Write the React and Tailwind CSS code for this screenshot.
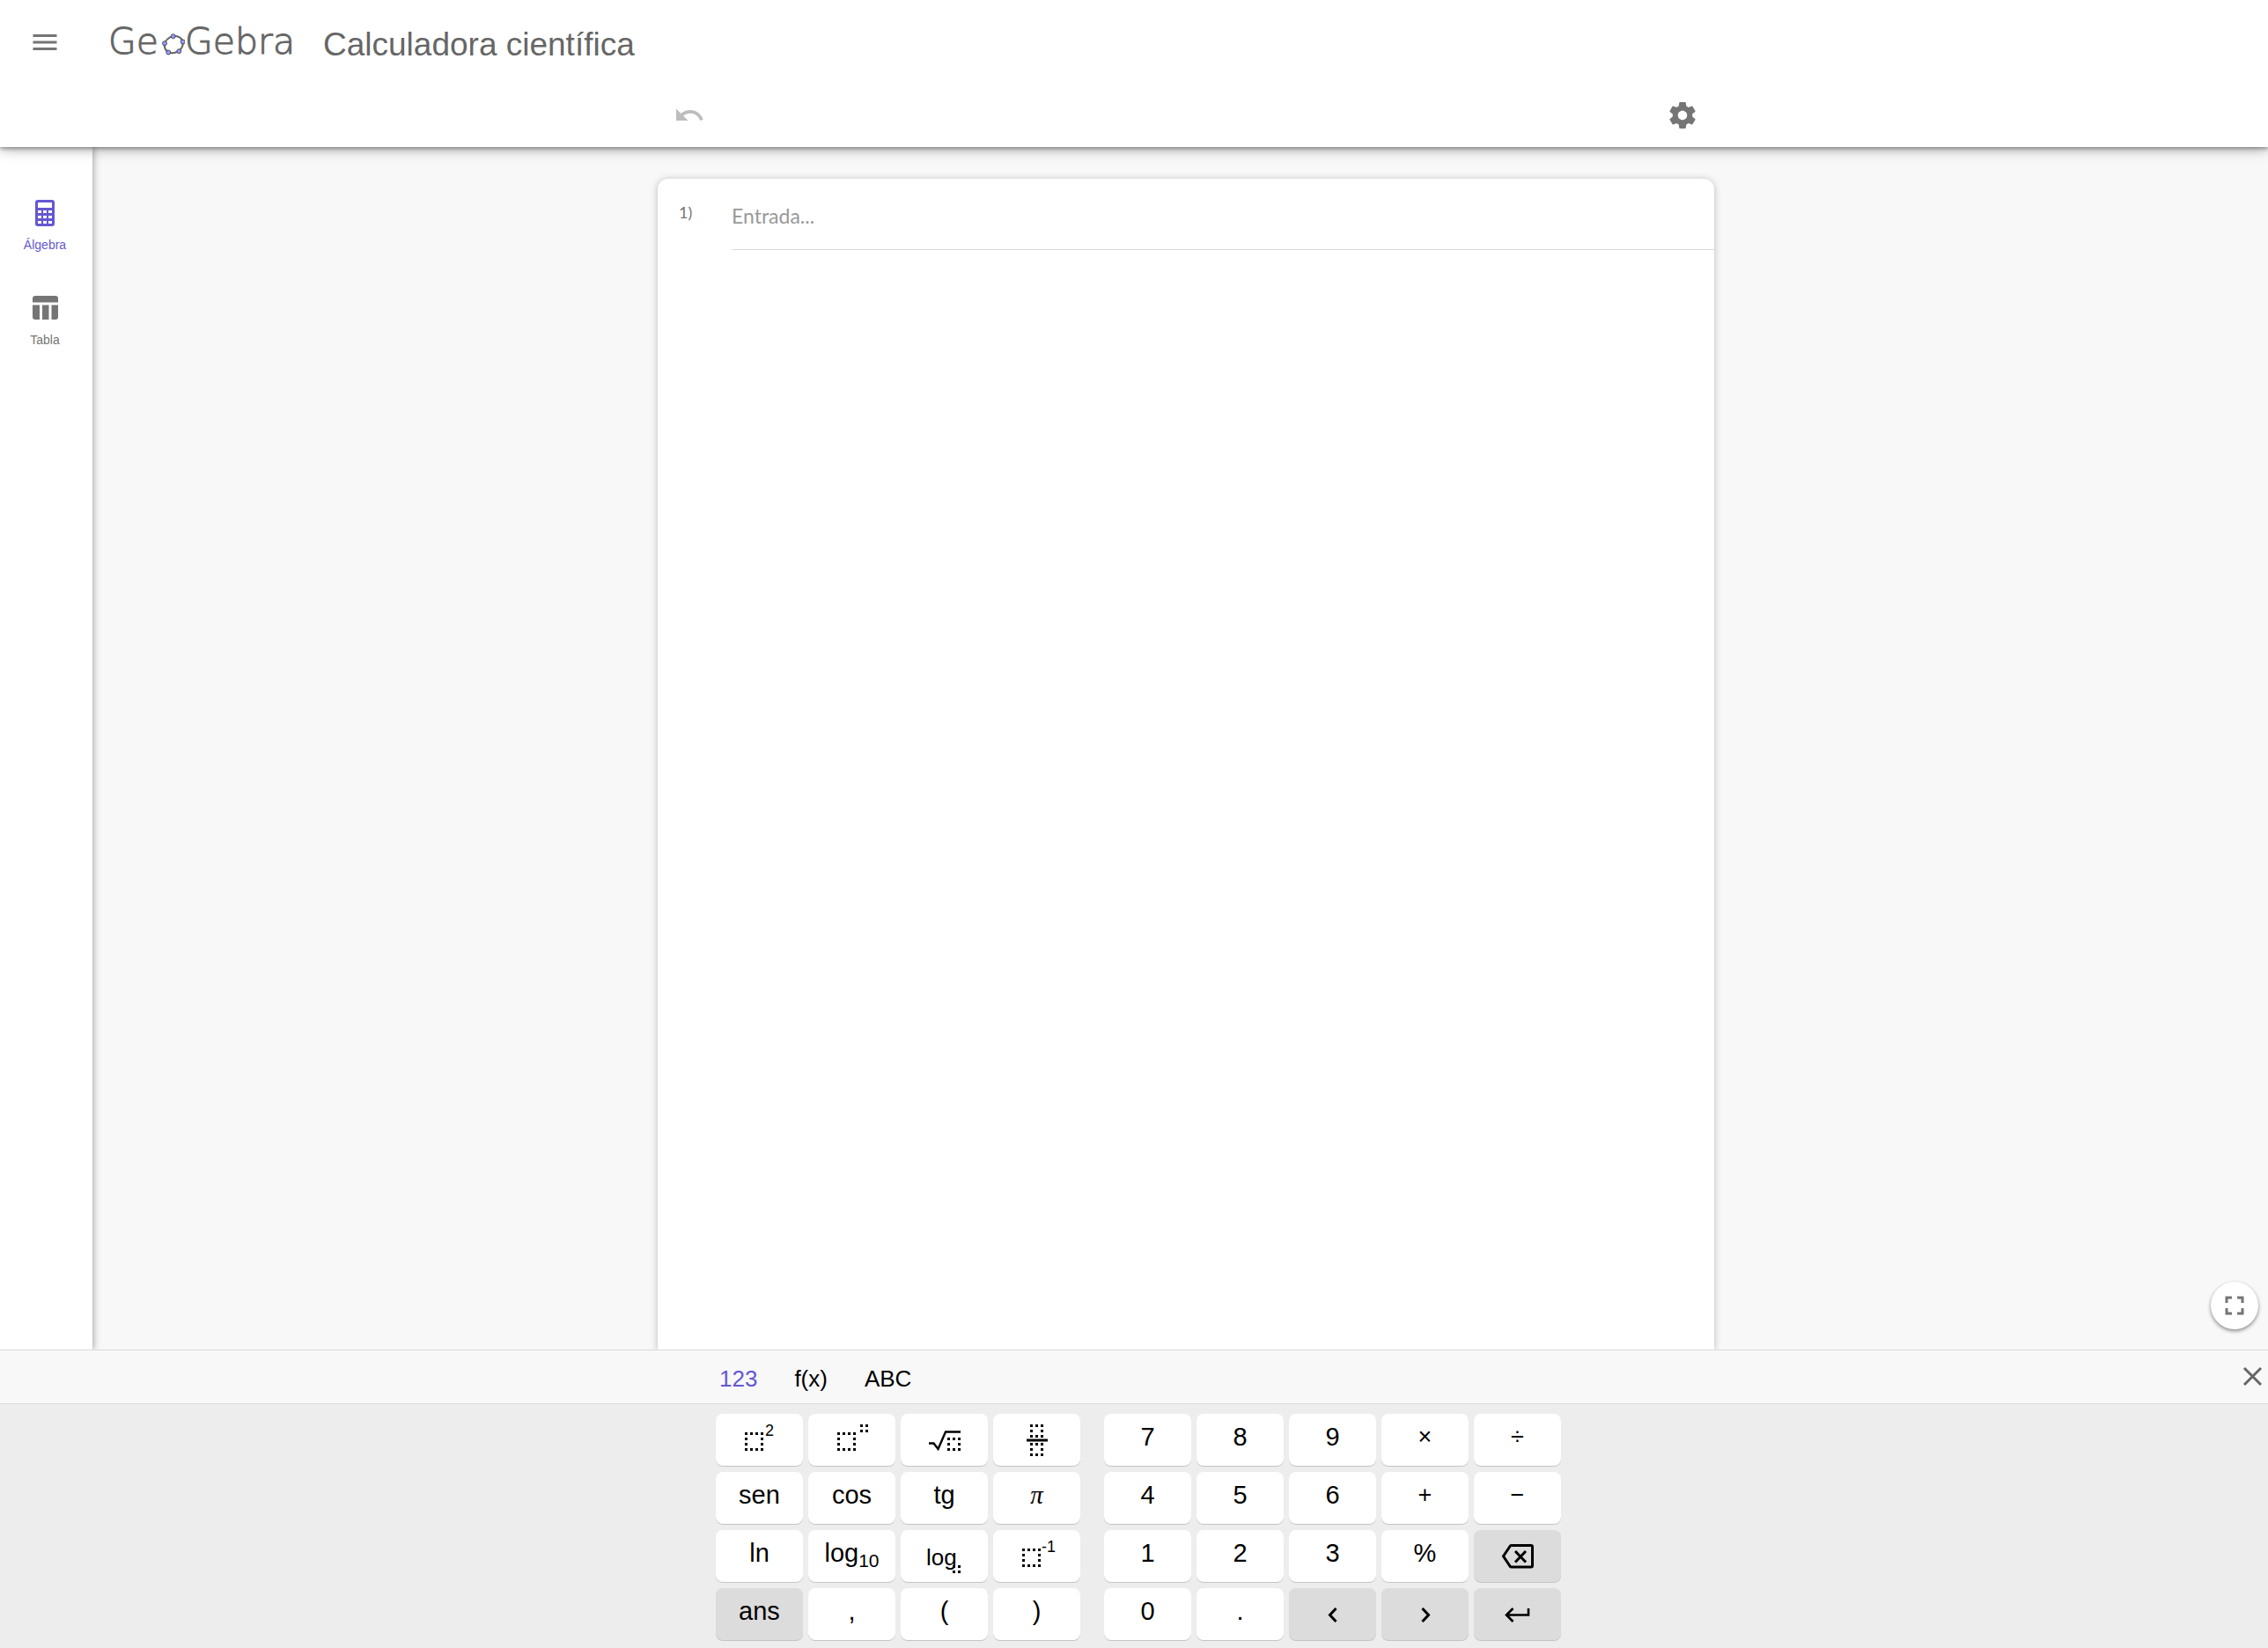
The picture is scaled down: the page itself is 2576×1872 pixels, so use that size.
import React from "react";

const ring = (x, y, cols, rows) => {
  const dots = [];
  for (let r = 0; r < rows; r++)
    for (let c = 0; c < cols; c++)
      if (r === 0 || c === 0 || r === rows - 1 || c === cols - 1)
        dots.push([x + c * 6, y + r * 6]);
  return dots;
};

function Dots({ x, y, cols, rows }) {
  return ring(x, y, cols, rows).map(([dx, dy]) => (
    <rect key={`${dx}-${dy}`} x={dx} y={dy} width="3" height="3" />
  ));
}

function KeyIcon({ children }) {
  return (
    <svg className="size-[49px]" viewBox="0 0 49 49" fill="currentColor" aria-hidden="true">
      {children}
    </svg>
  );
}

const stroke = { fill: "none", stroke: "currentColor", strokeWidth: 3 };

const icons = {
  square: (
    <KeyIcon>
      <Dots x={8} y={16} cols={4} rows={4} />
      <text x="31" y="20" fontSize="18">2</text>
    </KeyIcon>
  ),
  power: (
    <KeyIcon>
      <Dots x={8} y={16} cols={4} rows={4} />
      <Dots x={34} y={7} cols={2} rows={2} />
    </KeyIcon>
  ),
  root: (
    <KeyIcon>
      <path d="M7 28.5H12.5L17.5 35L26 15.5H43" {...stroke} strokeWidth="2.4" />
      <Dots x={28} y={22} cols={3} rows={3} />
    </KeyIcon>
  ),
  fraction: (
    <KeyIcon>
      <Dots x={17} y={7} cols={3} rows={3} />
      <rect x="13" y="23.5" width="24" height="3" />
      <Dots x={17} y={28} cols={3} rows={3} />
    </KeyIcon>
  ),
  logBase: (
    <KeyIcon>
      <text x="4" y="35" fontSize="26">log</text>
      <Dots x={34} y={35} cols={2} rows={2} />
    </KeyIcon>
  ),
  inverse: (
    <KeyIcon>
      <Dots x={8} y={16} cols={4} rows={4} />
      <text x="30" y="20" fontSize="18">-1</text>
    </KeyIcon>
  ),
  backspace: (
    <KeyIcon>
      <path d="M17.5 12.5H40A1.5 1.5 0 0 1 41.5 14V35.5A1.5 1.5 0 0 1 40 37H17.5Q16.5 37 16 36L8.5 24.75L16 13.5Q16.5 12.5 17.5 12.5Z" {...stroke} />
      <path d="M22 19L34 31.5M34 19L22 31.5" {...stroke} />
    </KeyIcon>
  ),
  left: (
    <KeyIcon>
      <path d="M28.5 18L21.5 25.5L28.5 33" {...stroke} />
    </KeyIcon>
  ),
  right: (
    <KeyIcon>
      <path d="M21.5 18L28.5 25.5L21.5 33" {...stroke} />
    </KeyIcon>
  ),
  enter: (
    <KeyIcon>
      <path d="M37 18V25.5H12.5M19.5 18L12 25.5L19.5 33" {...stroke} strokeWidth="2.6" />
    </KeyIcon>
  ),
};

const functionKeys = [
  { icon: "square", label: "al cuadrado" },
  { icon: "power", label: "potencia" },
  { icon: "root", label: "raíz cuadrada" },
  { icon: "fraction", label: "fracción" },
  { text: "sen" },
  { text: "cos" },
  { text: "tg" },
  { text: "π", serif: true },
  { text: "ln" },
  { text: "log", sub: "10" },
  { icon: "logBase", label: "logaritmo" },
  { icon: "inverse", label: "inverso" },
  { text: "ans", dark: true },
  { text: "," },
  { text: "(" },
  { text: ")" },
];

const numberKeys = [
  { text: "7" },
  { text: "8" },
  { text: "9" },
  { text: "×", small: true },
  { text: "÷", small: true },
  { text: "4" },
  { text: "5" },
  { text: "6" },
  { text: "+", small: true },
  { text: "−", small: true },
  { text: "1" },
  { text: "2" },
  { text: "3" },
  { text: "%" },
  { icon: "backspace", label: "borrar", dark: true },
  { text: "0" },
  { text: "." },
  { icon: "left", label: "izquierda", dark: true },
  { icon: "right", label: "derecha", dark: true },
  { icon: "enter", label: "intro", dark: true },
];

function Key({ text, sub, icon, label, dark, serif, small }) {
  return (
    <button
      type="button"
      aria-label={label}
      className={`flex h-[59px] w-[99px] items-center justify-center rounded-lg text-black shadow-[0_1px_0_#c4c4c4] ${
        dark ? "bg-[#dcdcdc]" : "bg-white"
      }`}
    >
      {icon ? (
        icons[icon]
      ) : (
        <span
          className={`pb-1.5 leading-none ${small ? "text-[27px]" : "text-[29px]"} ${
            serif ? "font-['Liberation_Serif',serif] italic" : ""
          }`}
        >
          {text}
          {sub && <sub className="bottom-[-6px] text-[21px] leading-none">{sub}</sub>}
        </span>
      )}
    </button>
  );
}

function Logo() {
  const points = [
    [16.7, 8.2],
    [27.7, 14.5],
    [23.3, 25.2],
    [11.3, 26.5],
    [7, 16.2],
  ];
  return (
    <a
      href="#inicio"
      aria-label="GeoGebra"
      className="flex items-center font-['DejaVu_Sans_Light','DejaVu_Sans',sans-serif] text-[41px] leading-none font-extralight text-[#666] [-webkit-text-stroke:1px_#666]"
    >
      <span>Ge</span>
      <svg className="size-[30px]" viewBox="0 0 30 30" aria-hidden="true">
        <ellipse cx="17.3" cy="17.6" rx="10.8" ry="9.2" transform="rotate(-28 17.3 17.6)" fill="none" stroke="#666" strokeWidth="2" />
        {points.map(([x, y]) => (
          <circle key={x} cx={x} cy={y} r="2.5" fill="#9999ff" stroke="#333" strokeWidth="0.8" />
        ))}
      </svg>
      <span>Gebra</span>
    </a>
  );
}

function Header() {
  return (
    <header className="z-20 bg-white shadow-[0_2px_4px_rgba(0,0,0,0.3),0_2px_14px_rgba(0,0,0,0.35)]">
      <div className="flex h-[95px] items-center pl-[33px]">
        <button type="button" aria-label="Menú" className="mr-[54px]">
          <svg className="size-9" viewBox="0 0 24 24" fill="#757575" aria-hidden="true">
            <path d="M3 18h18v-2H3v2zm0-5h18v-2H3v2zm0-7v2h18V6H3z" />
          </svg>
        </button>
        <Logo />
        <h1 className="ml-8 pt-1.5 text-[37px] leading-none text-[#666]">Calculadora científica</h1>
      </div>
      <div className="flex h-[72px] justify-center pl-[118px]">
        <div className="flex w-full max-w-[1200px] items-center justify-between px-[18px]">
          <button type="button" aria-label="Deshacer" disabled>
            <svg className="size-9" viewBox="0 0 24 24" fill="#bdbdbd" aria-hidden="true">
              <path d="M12.5 8c-2.65 0-5.05.99-6.9 2.6L2 7v9h9l-3.62-3.62c1.39-1.16 3.16-1.88 5.12-1.88 3.54 0 6.55 2.31 7.6 5.5l2.37-.78C21.08 11.03 17.15 8 12.5 8z" />
            </svg>
          </button>
          <button type="button" aria-label="Configuración">
            <svg className="size-9" viewBox="0 0 24 24" fill="#757575" aria-hidden="true">
              <path d="M19.43 12.98c.04-.32.07-.64.07-.98s-.03-.66-.07-.98l2.11-1.65c.19-.15.24-.42.12-.64l-2-3.46c-.12-.22-.39-.3-.61-.22l-2.49 1c-.52-.4-1.08-.73-1.69-.98l-.38-2.65C14.46 2.18 14.25 2 14 2h-4c-.25 0-.46.18-.49.42l-.38 2.65c-.61.25-1.17.59-1.69.98l-2.49-1c-.23-.09-.49 0-.61.22l-2 3.46c-.13.22-.07.49.12.64l2.11 1.65c-.04.32-.07.65-.07.98s.03.66.07.98l-2.11 1.65c-.19.15-.24.42-.12.64l2 3.46c.12.22.39.3.61.22l2.49-1c.52.4 1.08.73 1.69.98l.38 2.65c.03.24.24.42.49.42h4c.25 0 .46-.18.49-.42l.38-2.65c.61-.25 1.17-.59 1.69-.98l2.49 1c.23.09.49 0 .61-.22l2-3.46c.12-.22.07-.49-.12-.64l-2.11-1.65zM12 15.5c-1.93 0-3.5-1.57-3.5-3.5s1.57-3.5 3.5-3.5 3.5 1.57 3.5 3.5-1.57 3.5-3.5 3.5z" />
            </svg>
          </button>
        </div>
      </div>
    </header>
  );
}

function Sidebar() {
  return (
    <nav className="z-10 flex w-[105px] flex-col items-center gap-[42px] bg-white pt-[57px] pr-[3px] shadow-[1px_0_8px_rgba(0,0,0,0.35)]">
      <button type="button" className="flex flex-col items-center gap-1.5 text-[14px] leading-6 text-[#6557d2]">
        <svg className="size-9" viewBox="0 0 36 36" aria-hidden="true">
          <path
            fill="currentColor"
            fillRule="evenodd"
            d="M10 3H26Q29 3 29 6V30Q29 33 26 33H10Q7 33 7 30V6Q7 3 10 3ZM10 6V12H26V6ZM10 15V18H14V15ZM16 15V18H20V15ZM22 15V18H26V15ZM10 21V24H14V21ZM16 21V24H20V21ZM22 21V24H26V21ZM10 27V30H14V27ZM16 27V30H20V27ZM22 27V30H26V27Z"
          />
        </svg>
        <span>Álgebra</span>
      </button>
      <button type="button" className="flex flex-col items-center gap-1.5 text-[14px] leading-6 text-[#757575]">
        <svg className="size-9" viewBox="0 0 36 36" fill="currentColor" aria-hidden="true">
          <path d="M7 4H30Q33 4 33 7V11.500H4V7Q4 4 7 4ZM4 14.500H12V31H7Q4 31 4 28ZM15 14.500H22.500V31H15ZM25.500 14.500H33V28Q33 31 30 31H25.500Z" />
        </svg>
        <span>Tabla</span>
      </button>
    </nav>
  );
}

function Workspace() {
  return (
    <main className="relative flex flex-1 justify-center overflow-hidden bg-[#f8f8f8] pt-9 pl-[13px]">
      <section className="w-full max-w-[1200px] rounded-t-xl bg-white shadow-[0_1px_8px_rgba(0,0,0,0.25)]">
        <div className="flex font-[Lato,sans-serif]">
          <label htmlFor="entrada" className="w-[84px] pt-[26px] pl-6 text-[18px] leading-6 text-[#757575]">
            1)
          </label>
          <input
            id="entrada"
            type="text"
            placeholder="Entrada..."
            className="h-[81px] flex-1 border-b border-[#dcdcdc] pt-1 text-[23px] outline-none placeholder:text-[#999]"
          />
        </div>
      </section>
      <button
        type="button"
        aria-label="Pantalla completa"
        className="absolute right-[11px] bottom-[23px] flex size-[54px] items-center justify-center rounded-full bg-white shadow-[0_2px_4px_rgba(0,0,0,0.45)]"
      >
        <svg className="size-9" viewBox="0 0 24 24" fill="#757575" aria-hidden="true">
          <path d="M7 14H5v5h5v-2H7v-3zm-2-4h2V7h3V5H5v5zm12 7h-3v2h5v-5h-2v3zM14 5v2h3v3h2V5h-5z" />
        </svg>
      </button>
    </main>
  );
}

function Keyboard() {
  return (
    <footer className="z-20 bg-[#ededed]">
      <div className="flex border-y border-[#dadada] bg-[#f8f8f8]">
        <div className="flex flex-1 justify-center pl-[46px]">
          <div className="flex h-[60px] w-[960px] items-center gap-[42px] pt-1 pl-1 text-[26px] leading-none text-black">
            <button type="button" className="text-[#6557d2]">123</button>
            <button type="button">f(x)</button>
            <button type="button">ABC</button>
          </div>
        </div>
        <button type="button" aria-label="Cerrar teclado" className="flex w-9 items-center justify-center">
          <svg className="size-[34px]" viewBox="0 0 34 34" fill="none" stroke="#666" strokeWidth="3" aria-hidden="true">
            <path d="M8 7L27 26M27 7L8 26" />
          </svg>
        </button>
      </div>
      <div className="flex justify-center gap-[27px] pt-[11px] pb-[9px] pl-2.5">
        <div className="grid grid-cols-4 gap-x-1.5 gap-y-[7px]">
          {functionKeys.map((k) => (
            <Key key={k.text ? k.text + (k.sub ?? "") : k.icon} {...k} />
          ))}
        </div>
        <div className="grid grid-cols-5 gap-x-1.5 gap-y-[7px]">
          {numberKeys.map((k) => (
            <Key key={k.text ?? k.icon} {...k} />
          ))}
        </div>
      </div>
    </footer>
  );
}

export default function App() {
  return (
    <div className="flex min-h-screen flex-col bg-white font-['Liberation_Sans',Arial,sans-serif]">
      <Header />
      <div className="flex flex-1">
        <Sidebar />
        <Workspace />
      </div>
      <Keyboard />
    </div>
  );
}
